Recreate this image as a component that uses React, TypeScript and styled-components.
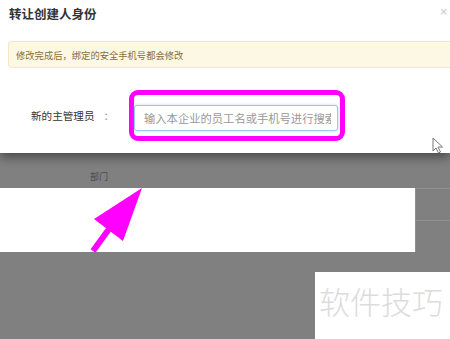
import styled, { createGlobalStyle } from "styled-components";

const GlobalStyle = createGlobalStyle`
  html, body {
    margin: 0;
    padding: 0;
    background: #808080;
  }
  body {
    font-family: "Noto Sans CJK SC", "Noto Sans", sans-serif;
  }
`;

const Page = styled.div`
  position: relative;
  width: 450px;
  height: 339px;
  overflow: hidden;
  background: #808080;
`;

const Modal = styled.div`
  position: relative;
  z-index: 2;
  height: 153px;
  background: #fff;
  box-shadow: 0 4px 10px rgba(0, 0, 0, 0.45);
`;

const Header = styled.div`
  display: flex;
  justify-content: space-between;
  align-items: flex-start;
  padding: 4px 2px 0 9px;
  height: 41px;
  box-sizing: border-box;
`;

const Title = styled.h3`
  margin: 0;
  font-size: 12.5px;
  line-height: 20px;
  font-weight: 600;
  color: #333;
`;

const Close = styled.span`
  font-family: "DejaVu Sans", sans-serif;
  font-size: 10px;
  line-height: 16px;
  color: #c8c8c8;
`;

const Alert = styled.div`
  display: flex;
  align-items: center;
  height: 27px;
  margin: 0 -10px 0 8px;
  padding-left: 7px;
  box-sizing: border-box;
  background: #fcf8e3;
  border: 1px solid #f6e7bf;
  border-radius: 3px;
  font-size: 9.3px;
  color: #8a6d3b;
`;

const FormRow = styled.div`
  display: flex;
  align-items: center;
  margin-top: 22px;
  padding-left: 31px;
`;

const Label = styled.label`
  display: flex;
  width: 98px;
  font-size: 10.6px;
  color: #333;
`;

const Colon = styled.span`
  margin-left: 9px;
  color: #999;
`;

const Highlight = styled.div`
  width: 216px;
  height: 51px;
  box-sizing: border-box;
  padding: 5px 2px 10px 0;
  border: 5px solid #ff00ff;
  border-radius: 9px;
`;

const SearchInput = styled.input`
  display: block;
  width: 204px;
  height: 26px;
  margin-top: 5px;
  box-sizing: border-box;
  padding: 0 6px 0 9px;
  border: 1px solid #9cc6ea;
  border-radius: 3px;
  box-shadow: 0 0 3px rgba(102, 175, 233, 0.5);
  font-family: "Noto Sans CJK SC", sans-serif;
  font-size: 11.3px;
  color: #555;
  outline: none;
  &::placeholder {
    color: #999;
  }
`;

const TableHead = styled.div`
  height: 35px;
  box-sizing: border-box;
  padding: 17px 0 0 90px;
  font-size: 9px;
  line-height: 14px;
  color: #4a4a4a;
`;

const TableRow = styled.div`
  display: flex;
  height: 64px;
`;

const WhiteCell = styled.div`
  width: 415px;
  background: #fff;
`;

const SideCell = styled.div`
  flex: 1;
  display: flex;
  flex-direction: column;
  border-left: 1px solid #909090;
`;

const SideLine = styled.div`
  height: 33px;
  border-top: 1px solid #8f8f8f;
`;

const WatermarkRow = styled.div`
  display: flex;
  justify-content: flex-end;
  margin-top: 20px;
`;

const Watermark = styled.div`
  width: 135px;
  height: 67px;
  box-sizing: border-box;
  padding: 9px 0 0 4px;
  background: #fff;
  font-size: 31px;
  line-height: 40px;
  font-weight: 300;
  color: #dcdcdc;
  white-space: nowrap;
`;

const Arrow = styled.svg`
  position: absolute;
  left: 0;
  top: 0;
  z-index: 3;
  pointer-events: none;
`;

const Cursor = styled.svg`
  position: absolute;
  left: 432px;
  top: 137px;
  z-index: 3;
`;

export default function App() {
  return (
    <Page>
      <GlobalStyle />
      <Modal>
        <Header>
          <Title>转让创建人身份</Title>
          <Close>×</Close>
        </Header>
        <Alert>修改完成后，绑定的安全手机号都会修改</Alert>
        <FormRow>
          <Label>
            新的主管理员<Colon>：</Colon>
          </Label>
          <Highlight>
            <SearchInput placeholder="输入本企业的员工名或手机号进行搜索" />
          </Highlight>
        </FormRow>
      </Modal>
      <TableHead>部门</TableHead>
      <TableRow>
        <WhiteCell />
        <SideCell>
          <SideLine />
          <SideLine />
        </SideCell>
      </TableRow>
      <WatermarkRow>
        <Watermark>软件技巧</Watermark>
      </WatermarkRow>
      <Arrow width="450" height="339" viewBox="0 0 450 339">
        <polygon points="142,188 94,219 123,241" fill="#ff00ff" />
        <line x1="109" y1="229" x2="93" y2="251" stroke="#ff00ff" strokeWidth="6" />
      </Arrow>
      <Cursor width="12" height="17" viewBox="0 0 12 17">
        <path d="M1 1 L1 14 L4 11 L6.5 16 L8.5 15 L6 10 L10.5 10 Z" fill="#fff" stroke="#777" strokeWidth="1" strokeLinejoin="round" />
      </Cursor>
    </Page>
  );
}
